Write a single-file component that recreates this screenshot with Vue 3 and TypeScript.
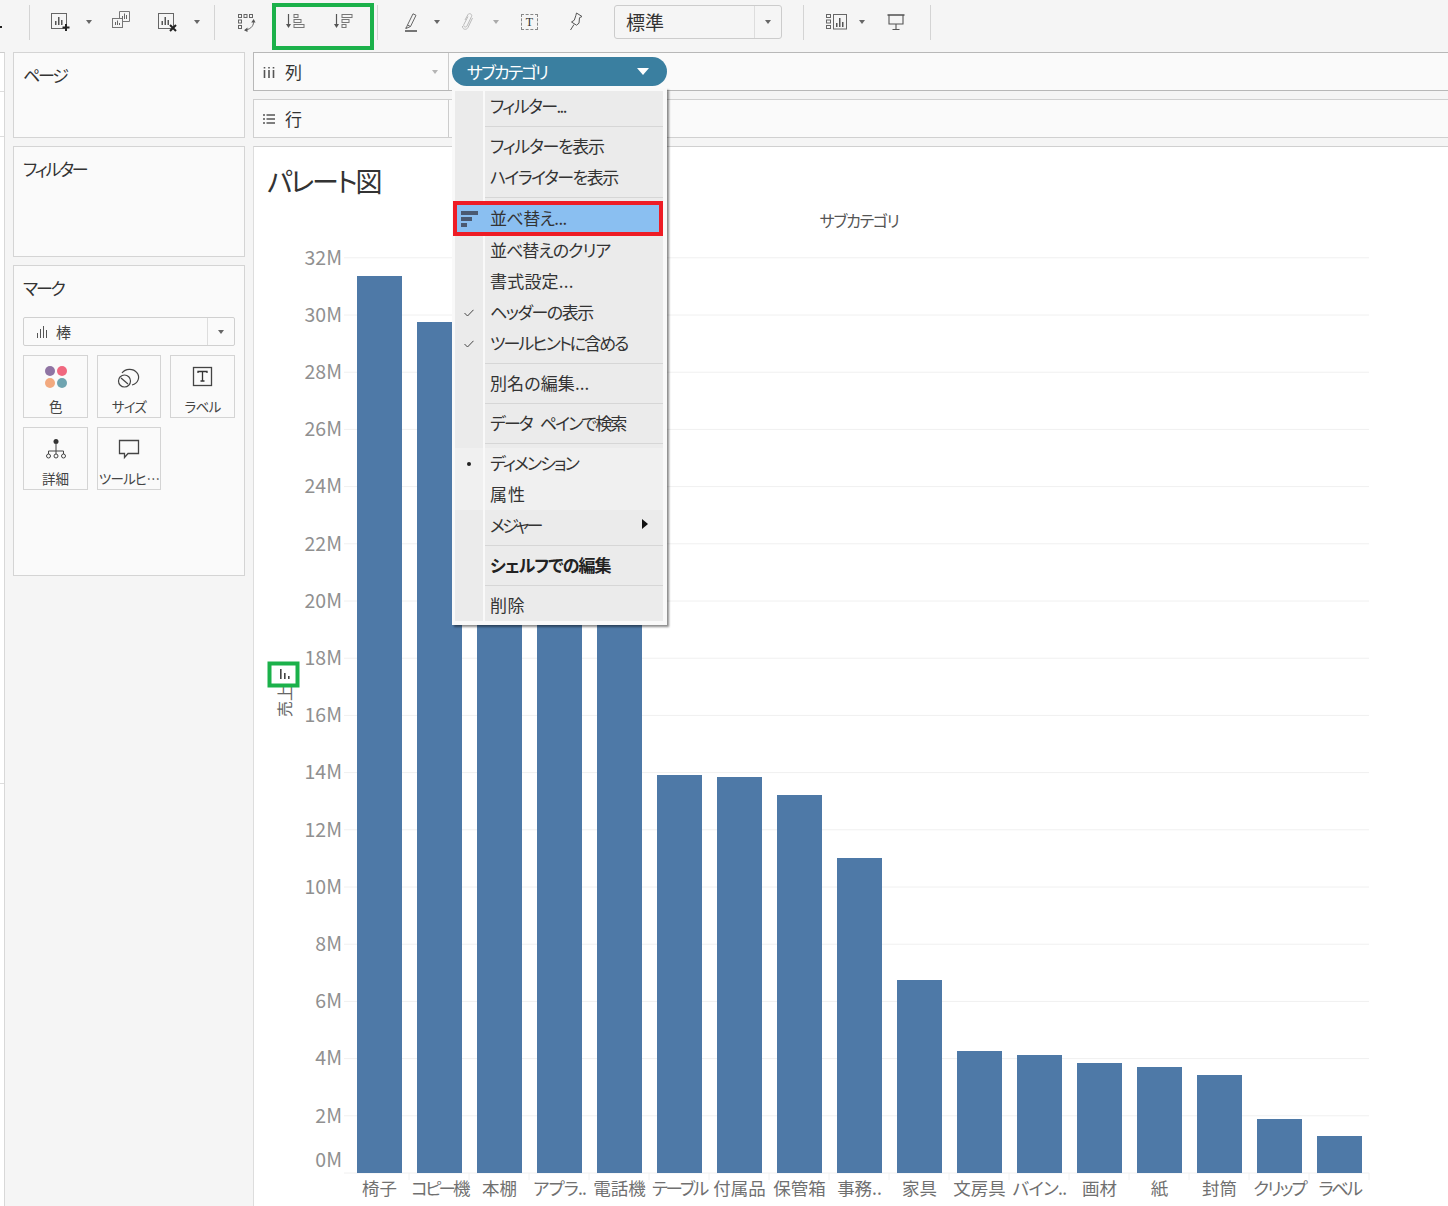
<script setup lang="ts">
interface MenuRow {
  kind: 'item' | 'sep'
  label?: string
  mark?: 'check' | 'dot' | 'sort'
  band?: boolean
  sub?: boolean
  bold?: boolean
  active?: boolean
  tight?: number
}

const menu: MenuRow[] = [
  { kind: 'item', label: 'フィルター...', tight: -1.6 },
  { kind: 'sep' },
  { kind: 'item', label: 'フィルターを表示', tight: -1.3 },
  { kind: 'item', label: 'ハイライターを表示', tight: -1.5 },
  { kind: 'sep' },
  { kind: 'item', label: '並べ替え...', mark: 'sort', active: true, tight: -0.6 },
  { kind: 'item', label: '並べ替えのクリア', tight: -1 },
  { kind: 'item', label: '書式設定...', tight: 0.2 },
  { kind: 'item', label: 'ヘッダーの表示', mark: 'check', tight: -1.5 },
  { kind: 'item', label: 'ツールヒントに含める', mark: 'check', tight: -2 },
  { kind: 'sep' },
  { kind: 'item', label: '別名の編集...', tight: 0.1 },
  { kind: 'sep' },
  { kind: 'item', label: 'データ ペインで検索', tight: -1.9 },
  { kind: 'sep' },
  { kind: 'item', label: 'ディメンション', mark: 'dot', band: true, tight: -1.9 },
  { kind: 'item', label: '属性', band: true, tight: 1 },
  { kind: 'item', label: 'メジャー', sub: true, tight: -2.6 },
  { kind: 'sep' },
  { kind: 'item', label: 'シェルフでの編集', bold: true, tight: -1 },
  { kind: 'sep' },
  { kind: 'item', label: '削除', tight: 0.6 },
]

const baseY = 1173
const step = 57.2
const ticks = Array.from({ length: 17 }, (_, i) => ({ v: i * 2, y: baseY - i * step }))

const bars = [
  { name: '椅子', top: 276, tight: 0 },
  { name: 'コピー機', top: 322, tight: -2.8 },
  { name: '本棚', top: 420, tight: 0 },
  { name: 'アプラ..', top: 460, tight: -0.9 },
  { name: '電話機', top: 500, tight: 0 },
  { name: 'テーブル', top: 775, tight: -2.2 },
  { name: '付属品', top: 777, tight: 0 },
  { name: '保管箱', top: 795, tight: 0 },
  { name: '事務..', top: 858, tight: 0 },
  { name: '家具', top: 980, tight: 0 },
  { name: '文房具', top: 1051, tight: 0 },
  { name: 'バイン..', top: 1055, tight: -0.7 },
  { name: '画材', top: 1063, tight: 0 },
  { name: '紙', top: 1067, tight: 0 },
  { name: '封筒', top: 1075, tight: 0 },
  { name: 'クリップ', top: 1119, tight: -1.9 },
  { name: 'ラベル', top: 1136, tight: -2.4 },
].map((b, i) => ({ ...b, x: 357 + i * 60 }))
</script>

<template>
  <div class="app">
    <header class="toolbar">
      <span class="dot-mark"></span>
      <i class="sep s-first"></i>
      <svg class="ic i-add" width="20" height="20" viewBox="0 0 20 20"><rect x=".5" y="1.5" width="15" height="15" fill="none" stroke="#666"/><path d="M4 13V9h1.500v4zM7 13V5h1.500v8zM10 13V8h1.500v5z" fill="#555"/><path d="M15 12v7M11.500 15.500h7" stroke="#222" stroke-width="2"/></svg>
      <i class="caret c-a"></i>
      <svg class="ic i-dup" width="18" height="18" viewBox="0 0 18 18"><path d="M7.500 8V.5h10v10H11" fill="none" stroke="#777"/><rect x=".5" y="7.500" width="10" height="9" fill="#f5f5f5" stroke="#777"/><path d="M10 8V5h1v3zM12 8V2.500h1V8zM14 8V4h1v4zM3 14v-3h1v3zM5 14V9.500h1V14zM7 14v-2h1v2z" fill="#666"/></svg>
      <svg class="ic i-clear" width="20" height="20" viewBox="0 0 20 20"><rect x=".5" y="1.500" width="15" height="15" fill="none" stroke="#666"/><path d="M3.500 13V9H5v4zM6.500 13V5H8v8zM9.500 13V8H11v5z" fill="#555"/><path d="M12 13l6 6M18 13l-6 6" stroke="#222" stroke-width="2"/></svg>
      <i class="caret c-b"></i>
      <i class="sep s-b"></i>
      <svg class="ic i-swap" width="18" height="18" viewBox="0 0 18 18"><g fill="none" stroke="#666"><rect x=".5" y=".5" width="3" height="3"/><rect x="6" y=".5" width="3" height="3"/><rect x="11.500" y=".5" width="3" height="3"/><rect x=".5" y="6" width="3" height="3"/><rect x=".5" y="11.500" width="3" height="3"/><path d="M15.500 7c.5 4-2 8-8 9"/></g><path d="M13.200 8.500l2.500-3.500 1.800 3.500zM9.500 13.500v4.500L6 16.200z" fill="#555"/></svg>
      <svg class="ic i-asc" width="19" height="15" viewBox="0 0 19 15"><path d="M2.500 0v11" stroke="#555" stroke-width="1.200"/><path d="M0 10h5l-2.500 4z" fill="#555"/><g fill="none" stroke="#777"><rect x="8" y=".5" width="4" height="3"/><rect x="8" y="5.500" width="7" height="3"/><rect x="8" y="10.500" width="10" height="3"/></g></svg>
      <svg class="ic i-desc" width="19" height="15" viewBox="0 0 19 15"><path d="M2.500 0v11" stroke="#555" stroke-width="1.200"/><path d="M0 10h5l-2.500 4z" fill="#555"/><g fill="none" stroke="#777"><rect x="8" y=".5" width="10" height="3"/><rect x="8" y="5.500" width="7" height="3"/><rect x="8" y="10.500" width="4" height="3"/></g></svg>
      <i class="sep s-c"></i>
      <svg class="ic i-hl" width="14" height="19" viewBox="0 0 14 19"><path d="M9 .8l3 1.500L6.500 13.500l-3-1.500zM3.500 12l-1.500 3.500 4.500-2" fill="none" stroke="#666"/><path d="M1 15.500l1.200-1" stroke="#888"/><path d="M1 18h12" stroke="#555" stroke-width="1.600"/></svg>
      <i class="caret c-c"></i>
      <svg class="ic i-clip" width="14" height="19" viewBox="0 0 14 19"><path d="M4 8l3-5.500c1-1.800 4.500-.5 3.600 1.800L6 14c-1 2-3.800.8-3.300-1.200L7 4.500M11.500 6L7 15.500c-1.500 3-6 2-5.500-1.500" fill="none" stroke="#bbb"/></svg>
      <i class="caret c-d muted"></i>
      <span class="t-box">T</span>
      <svg class="ic i-pin" width="14" height="19" viewBox="0 0 14 19"><path d="M7.500 1l5.500 3.500-2.500 1.200-.5 5.500-2.500 2-5-3.200 2.800-1.800 1.500-4.500zM5 12.500L1.500 18" fill="none" stroke="#555"/></svg>
      <div class="zoom-select"><span class="zoom-text">標準</span><span class="zoom-arrow"><i class="caret"></i></span></div>
      <i class="sep s-d"></i>
      <svg class="ic i-show" width="21" height="16" viewBox="0 0 21 16"><g fill="none" stroke="#666"><rect x=".5" y=".5" width="4" height="3"/><rect x=".5" y="6" width="4" height="3"/><rect x=".5" y="11.500" width="4" height="3"/><rect x="7.500" y=".5" width="13" height="14.500"/></g><path d="M10 13V9h1.500v4zM13 13V4h1.500v9zM16 13V8h1.500v5z" fill="#555"/></svg>
      <i class="caret c-e"></i>
      <svg class="ic i-present" width="18" height="18" viewBox="0 0 18 18"><path d="M.5 2h17" stroke="#444" stroke-width="1.400"/><path d="M2 2v9h14V2M9 11v5.500M5.500 16.500h7" fill="none" stroke="#555" stroke-width="1.100"/></svg>
      <i class="sep s-e"></i>
      <span class="green-box"></span>
    </header>

    <div class="body">
      <aside class="sliver">
        <i class="sl sl-a"></i>
        <i class="sl sl-b"></i>
        <i class="sl sl-c"></i>
      </aside>

      <aside class="side">
        <section class="panel pages"><h3>ページ</h3></section>
        <section class="panel filters"><h3>フィルター</h3></section>
        <section class="panel marks">
          <h3>マーク</h3>
          <div class="mark-select">
            <svg class="bar-glyph" width="12" height="12" viewBox="0 0 12 12"><path d="M.5 12V7M3.500 12V3M6.500 12V0M9.500 12V4" stroke="#555" fill="none"/></svg>
            <span class="mark-name">棒</span>
            <span class="mark-arrow"><i class="caret"></i></span>
          </div>
          <div class="tiles">
            <div class="tile">
              <svg width="24" height="24" viewBox="0 0 24 24"><circle cx="6" cy="6" r="5" fill="#8f74a3"/><circle cx="18" cy="6" r="5" fill="#f0687f"/><circle cx="6" cy="18" r="5" fill="#f2a97f"/><circle cx="18" cy="18" r="5" fill="#6fa4b0"/></svg>
              <span>色</span>
            </div>
            <div class="tile">
              <svg width="24" height="24" viewBox="0 0 24 24"><path d="M5 8a9 8 0 1 1 10 12" fill="none" stroke="#444" stroke-width="1.200"/><circle cx="7.500" cy="16" r="6" fill="none" stroke="#444" stroke-width="1.200"/><path d="M4 13l7 6" stroke="#444" stroke-width="1.200"/></svg>
              <span>サイズ</span>
            </div>
            <div class="tile">
              <svg width="24" height="24" viewBox="0 0 24 24"><rect x="2.500" y="2.500" width="18" height="18" fill="none" stroke="#444" stroke-width="1.300"/><path d="M7 8V6.500h9V8M11.500 6.500V16M9.500 16h4" fill="none" stroke="#333" stroke-width="1.300"/></svg>
              <span>ラベル</span>
            </div>
            <div class="tile">
              <svg width="24" height="24" viewBox="0 0 24 24"><circle cx="12" cy="4.500" r="2.500" fill="#333"/><path d="M12 7v7M4.500 17v-3h15v3M12 14v3" fill="none" stroke="#444"/><circle cx="4.500" cy="19" r="2" fill="none" stroke="#444"/><circle cx="12" cy="19" r="2" fill="none" stroke="#444"/><circle cx="19.500" cy="19" r="2" fill="none" stroke="#444"/></svg>
              <span class="kanji">詳細</span>
            </div>
            <div class="tile">
              <svg width="24" height="24" viewBox="0 0 24 24"><path d="M2.500 3.500h19v13H11l-3.500 4v-4h-5z" fill="none" stroke="#444" stroke-width="1.300"/></svg>
              <span>ツールヒ…</span>
            </div>
          </div>
        </section>
      </aside>

      <main class="main">
        <div class="shelf col-shelf">
          <div class="shelf-head">
            <svg class="sh-ic" width="12" height="12" viewBox="0 0 12 12"><path d="M1.500 4v8M6 4v8M10.500 4v8" stroke="#555" stroke-width="1.600"/><path d="M1.500 1v1.500M6 1v1.500M10.500 1v1.500" stroke="#555" stroke-width="1.600"/></svg>
            <span>列</span>
            <i class="caret light"></i>
          </div>
          <div class="shelf-body">
            <div class="pill">
              <span class="pill-text">サブカテゴリ</span>
              <i class="pill-caret"></i>
              <div class="menu">
                <template v-for="(row, i) in menu" :key="i">
                  <div v-if="row.kind === 'sep'" class="m-sep"><span class="gut"></span><span class="rule"></span></div>
                  <div v-else class="m-item" :class="{ band: row.band, active: row.active, bold: row.bold }">
                    <span class="gut">
                      <svg v-if="row.mark === 'check'" width="10" height="8" viewBox="0 0 10 8"><path d="M.5 4l3 3L9.500 .8" fill="none" stroke="#444"/></svg>
                      <i v-else-if="row.mark === 'dot'" class="bullet"></i>
                      <svg v-else-if="row.mark === 'sort'" class="sort-ic" width="17" height="16" viewBox="0 0 17 16"><path d="M0 0h17v4H0zM0 6h11v4H0zM0 12h6v4H0z" fill="#4a5a72"/></svg>
                    </span>
                    <span class="m-label" :style="{ letterSpacing: row.tight + 'px' }">{{ row.label }}</span>
                    <i v-if="row.sub" class="sub-arrow"></i>
                  </div>
                </template>
                <span class="red-box"></span>
              </div>
            </div>
          </div>
        </div>
        <div class="shelf row-shelf">
          <div class="shelf-head">
            <svg class="sh-ic" width="12" height="12" viewBox="0 0 12 12"><path d="M0 2h2M3.500 2H12M0 6h2M3.500 6H12M0 10h2M3.500 10H12" stroke="#555" stroke-width="1.500"/></svg>
            <span>行</span>
          </div>
          <div class="shelf-body"></div>
        </div>

        <section class="view">
          <h1 class="title">パレート図</h1>
          <svg class="chart" width="1194" height="1000" viewBox="254 206 1194 1000">
            <text x="859" y="227" class="col-head" text-anchor="middle">サブカテゴリ</text>
            <line v-for="t in ticks" :key="t.v" x1="344" x2="1369" :y1="t.y" :y2="t.y" class="grid" />
            <text
              v-for="t in ticks"
              :key="'l' + t.v"
              x="342"
              :y="(t.v === 0 ? t.y - 13 : t.y) + 6.700"
              class="tick"
              text-anchor="end"
            >{{ t.v }}M</text>
            <rect v-for="b in bars" :key="b.name" :x="b.x" :y="b.top" width="45" :height="baseY - b.top" class="bar" />
            <line v-for="(b, i) in bars" :key="'s' + i" :x1="b.x + 52" :x2="b.x + 52" :y1="baseY" y2="1180" class="grid" />
            <text
              v-for="b in bars"
              :key="'n' + b.name"
              :x="b.x + 22.500"
              y="1195"
              class="cat"
              text-anchor="middle"
              :style="{ letterSpacing: b.tight + 'px' }"
            >{{ b.name }}</text>
            <text x="0" y="0" class="axis" text-anchor="middle" transform="translate(291 701) rotate(-90)">売上</text>
            <rect x="269.500" y="663.500" width="28" height="22" class="green" />
            <path d="M280 679v-10h1.600v10zM284 679v-6h1.600v6zM288 679v-3h1.600v3z" fill="#444" />
          </svg>
        </section>
      </main>
    </div>
  </div>
</template>

<style>
html, body { margin: 0; padding: 0; overflow: hidden; background: #fff; }
</style>

<style scoped>
.app {
  width: 1448px;
  height: 1206px;
  display: flex;
  flex-direction: column;
  overflow: hidden;
  font-family: "Noto Sans CJK JP", "Noto Sans", sans-serif;
  font-feature-settings: "palt";
  color: #333;
  background: #fff;
}
i { display: block; font-style: normal; }

.toolbar {
  position: relative;
  flex: none;
  height: 52px;
  display: flex;
  align-items: flex-start;
  background: #f5f5f5;
  box-sizing: border-box;
}
.dot-mark { width: 2px; height: 2px; background: #222; margin-top: 26px; }
.sep { flex: none; width: 1px; height: 35px; margin-top: 5px; background: #d4d4d4; }
.s-first { margin-left: 27px; }
.ic { flex: none; display: block; }
.caret { flex: none; width: 0; height: 0; border-left: 3px solid transparent; border-right: 3px solid transparent; border-top: 4px solid #666; }
.caret.light { border-top-color: #b5b5b5; }
.caret.muted { border-top-color: #aaa; }
.toolbar > .caret { margin-top: 20px; }

.i-add { margin-left: 21px; margin-top: 12px; }
.c-a { margin-left: 15px; }
.i-dup { margin-left: 20px; margin-top: 11px; }
.i-clear { margin-left: 28px; margin-top: 12px; }
.c-b { margin-left: 16px; }
.s-b { margin-left: 14px; }
.i-swap { margin-left: 23px; margin-top: 14px; }
.i-asc { margin-left: 30px; margin-top: 14px; }
.i-desc { margin-left: 29px; margin-top: 14px; }
.s-c { margin-left: 24px; }
.i-hl { margin-left: 26px; margin-top: 13px; }
.c-c { margin-left: 16px; }
.i-clip { margin-left: 21px; margin-top: 12px; }
.c-d { margin-left: 18px; }
.t-box {
  flex: none;
  margin-left: 22px;
  margin-top: 14px;
  width: 17px;
  height: 16px;
  box-sizing: border-box;
  border: 1px dashed #888;
  font: 12px/14px "Liberation Serif", serif;
  text-align: center;
  color: #333;
}
.i-pin { margin-left: 31px; margin-top: 12px; }
.zoom-select {
  flex: none;
  margin-left: 31px;
  margin-top: 5px;
  width: 168px;
  height: 34px;
  box-sizing: border-box;
  border: 1px solid #ccc;
  border-radius: 3px;
  display: flex;
  align-items: center;
}
.zoom-text { flex: 1; padding-left: 11px; font-size: 19px; line-height: 32px; color: #333; }
.zoom-arrow { flex: none; width: 26px; height: 32px; border-left: 1px solid #ddd; display: flex; align-items: center; justify-content: center; }
.s-d { margin-left: 21px; }
.i-show { margin-left: 22px; margin-top: 14px; }
.c-e { margin-left: 12px; }
.i-present { margin-left: 22px; margin-top: 13px; }
.s-e { margin-left: 25px; }
.green-box {
  position: absolute;
  left: 272px;
  top: 3px;
  width: 102px;
  height: 47px;
  box-sizing: border-box;
  border: 4px solid #1bb14a;
}

.body { flex: 1; display: flex; min-height: 0; }
.sliver {
  flex: none;
  width: 4px;
  border-top: 1px solid #ccc;
  border-right: 1px solid #d8d8d8;
  background: #fff;
  display: flex;
  flex-direction: column;
}
.sl { flex: none; border-bottom: 1px solid #ddd; }
.sl-a { height: 38px; }
.sl-b { height: 44px; }
.sl-c { height: 646px; }

.side {
  flex: none;
  width: 232px;
  padding: 0 8px;
  background: #f5f5f5;
  display: flex;
  flex-direction: column;
  gap: 8px;
}
.panel {
  box-sizing: border-box;
  border: 1px solid #d4d4d4;
  background: #fafafa;
  padding: 0 9px;
}
.panel h3 { margin: 0; font-weight: 400; font-size: 17px; letter-spacing: -2.2px; line-height: 24px; color: #333; padding-top: 10px; }
.pages { height: 86px; }
.filters { height: 111px; }
.marks { height: 311px; }
.mark-select {
  margin-top: 17px;
  height: 29px;
  box-sizing: border-box;
  border: 1px solid #d0d0d0;
  border-radius: 2px;
  display: flex;
  align-items: center;
  background: #fafafa;
}
.bar-glyph { margin-left: 13px; }
.mark-name { flex: 1; margin-left: 7px; margin-top: -1px; font-size: 15px; color: #444; }
.mark-arrow { flex: none; width: 26px; height: 27px; border-left: 1px solid #ddd; display: flex; align-items: center; justify-content: center; }
.tiles {
  margin-top: 9px;
  display: grid;
  grid-template-columns: 65px 64px 65px;
  grid-auto-rows: 63px;
  gap: 9px;
}
.tile {
  box-sizing: border-box;
  border: 1px solid #d4d4d4;
  background: #fafafa;
  display: flex;
  flex-direction: column;
  align-items: center;
  padding-top: 9px;
}
.tile span { font-size: 13.500px; letter-spacing: -0.7px; line-height: 18px; margin-top: 8px; color: #444; white-space: nowrap; }
.tile span.kanji { letter-spacing: 0; }

.main { flex: 1; min-width: 0; display: flex; flex-direction: column; background: #f5f5f5; }
.shelf { flex: none; height: 39px; display: flex; box-sizing: border-box; border-top: 1px solid #d0d0d0; border-bottom: 1px solid #d0d0d0; border-left: 1px solid #d0d0d0; background: #fafafa; }
.col-shelf { border-color: #b8b8b8; }
.row-shelf { margin-top: 8px; margin-bottom: 8px; }
.shelf-head {
  flex: none;
  width: 195px;
  box-sizing: border-box;
  border-right: 1px solid #ccc;
  background: #fafafa;
  display: flex;
  align-items: center;
  padding: 0 10px 0 9px;
  font-size: 17px;
  color: #333;
}
.sh-ic { margin-right: 10px; }
.shelf-head > span { margin-top: -1px; }
.shelf-head .caret { margin-left: auto; }
.shelf-body { flex: 1; position: relative; }

.pill {
  position: relative;
  z-index: 5;
  margin: 4px 0 0 3px;
  width: 215px;
  height: 29px;
  box-sizing: border-box;
  padding: 0 18px 0 15px;
  border-radius: 15px;
  background: #3a7fa0;
  color: #fff;
  font-size: 17px;
  display: flex;
  align-items: center;
  justify-content: space-between;
}
.pill-text { letter-spacing: -2px; margin-top: -1px; }
.pill-caret { width: 0; height: 0; border-left: 6px solid transparent; border-right: 6px solid transparent; border-top: 7px solid #fff; }

.menu {
  position: absolute;
  left: 0;
  top: 31px;
  width: 215px;
  box-sizing: border-box;
  border: 3px solid #f9f9f9;
  border-bottom-width: 4px;
  border-right-width: 4px;
  background: #ebebeb;
  box-shadow: 2px 2px 2px rgba(0, 0, 0, 0.45);
  color: #333;
  font-size: 17px;
}
.gut { flex: none; width: 28px; height: 100%; border-right: 2px solid #f9f9f9; display: flex; align-items: center; justify-content: center; }
.m-item { display: flex; align-items: center; height: 31px; position: relative; }
.m-item.band { background: #f0f0f0; }
.m-item.active { height: 33px; background: #8abff1; }
.m-item.active .gut { border-right-color: transparent; }
.m-item.bold { font-weight: 700; color: #222; }
.m-label { padding-left: 5px; white-space: nowrap; word-spacing: 6px; line-height: 31px; margin-top: -2px; }
.m-sep { display: flex; align-items: center; height: 9px; }
.rule { flex: 1; height: 1px; background: #d6d6d6; }
.bullet { width: 4px; height: 4px; border-radius: 50%; background: #222; }
.sort-ic { margin-left: 0; }
.sub-arrow { position: absolute; left: 187px; top: 9px; width: 0; height: 0; border-top: 5px solid transparent; border-bottom: 5px solid transparent; border-left: 6px solid #111; }
.red-box {
  position: absolute;
  left: -2px;
  top: 110px;
  width: 210px;
  height: 35px;
  box-sizing: border-box;
  border: 4px solid #ee1c25;
}

.view { flex: 1; min-height: 0; border-top: 1px solid #d0d0d0; border-left: 1px solid #ddd; background: #fff; display: flex; flex-direction: column; }
.title { flex: none; margin: 0; height: 59px; padding: 14px 0 0 13px; box-sizing: border-box; font-size: 27px; font-weight: 400; letter-spacing: -2px; line-height: 40px; color: #333; }
.chart { display: block; flex: none; overflow: visible; }
.col-head { font-size: 16px; fill: #555; letter-spacing: -1.3px; }
.grid { stroke: #f0f0f0; stroke-width: 1; }
.tick { font-size: 19.500px; fill: #909090; }
.bar { fill: #4e79a7; }
.cat { font-size: 17.500px; fill: #707070; }
.axis { font-size: 16px; fill: #666; }
.green { fill: #fff; stroke: #1bb14a; stroke-width: 4; }
</style>
